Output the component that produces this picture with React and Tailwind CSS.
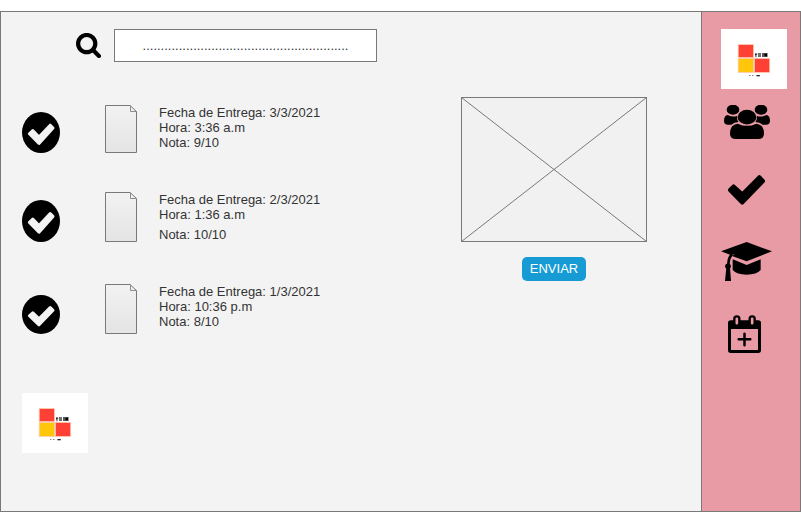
const TICK = "M7.4 21.8 L10.8 18.6 L17 25 L28.2 13.2 L31 16 L17 31.4 Z";

function CheckBadge({ className }) {
  return (
    <svg viewBox="0 0 38 41" preserveAspectRatio="none" className={`w-[38px] shrink-0 ${className}`}>
      <ellipse cx="19" cy="20.5" rx="19" ry="20.5" fill="#000" />
      <path d={TICK} fill="#f3f3f3" stroke="#f3f3f3" strokeWidth="3" strokeLinejoin="round" />
    </svg>
  );
}

function Doc({ className, h }) {
  return (
    <svg viewBox={`0 0 32 ${h}`} className={`w-8 shrink-0 ${className}`}>
      <defs>
        <linearGradient id={`paper${h}`} x1="0" y1="0" x2="0" y2="1">
          <stop offset="0" stopColor="#f2f2f2" />
          <stop offset="1" stopColor="#e4e4e4" />
        </linearGradient>
      </defs>
      <path d={`M.5 .5 H25 L31.5 6.5 V${h - 0.5} H.5 Z`} fill={`url(#paper${h})`} stroke="#797979" />
      <path d="M25.5 .5 V6.5 H31.5" fill="none" stroke="#8c8c8c" />
    </svg>
  );
}

function Logo() {
  return (
    <svg viewBox="0 0 66 60" className="h-[60px] w-[66px] shrink-0 bg-white">
      <g stroke="#ffc9ad" strokeWidth=".8">
        <rect x="17.2" y="15.6" width="15.3" height="13" fill="#ff4034" />
        <rect x="17.2" y="29.4" width="15.3" height="14" fill="#ffc60a" />
        <rect x="33.4" y="29.4" width="15.3" height="14" fill="#ff4034" />
      </g>
      <g fill="#222">
        <path d="M34 24.5h2.2v1.2h-.8v2.5h-.9v-2h-.5z" />
        <path d="M37 24h3v4h-3z" opacity=".65" />
        <path d="M41 24h5.6v4H41z" opacity=".75" />
        <path d="M43.5 24.7h2.5v2.6h-2.5z" fill="#000" />
        <path d="M28 46h1.5v1H28zM31 46h1.5v1H31z" opacity=".55" />
        <path d="M35.4 46h3.4v1.3h-3.4z" />
      </g>
    </svg>
  );
}

function SearchIcon() {
  return (
    <svg viewBox="0 0 25 25" className="mt-1 h-[25px] w-[25px] shrink-0" fill="none" stroke="#000">
      <circle cx="10.7" cy="10.6" r="8.6" strokeWidth="4.2" />
      <path d="M17.5 17.5 L22.9 22.9" strokeWidth="4.2" strokeLinecap="round" />
    </svg>
  );
}

function UsersIcon() {
  return (
    <svg viewBox="72 315 138 102" className="ml-[3px] mt-4 h-[34px] w-[46px]">
      <ellipse cx="99" cy="329" rx="19" ry="15" />
      <ellipse cx="183" cy="329" rx="19" ry="15" />
      <path d="M83 345 Q99 353 112 347 Q109 358 116 366 Q102 367 94 374 H84 Q72 374 72 363 Q72 347 83 345Z" />
      <path d="M199 345 Q183 353 170 347 Q173 358 166 366 Q180 367 188 374 H198 Q210 374 210 363 Q210 347 199 345Z" />
      <ellipse cx="141" cy="351.5" rx="28" ry="22" />
      <path d="M113 371 Q141 384 169 371 Q192 373 192 401 Q192 417 174 417 H108 Q90 417 90 401 Q90 373 113 371Z" />
    </svg>
  );
}

function CheckIcon() {
  return (
    <svg viewBox="84 75 112 90" className="ml-[7px] mt-9 h-[30px] w-[37px]">
      <path d="M90 120 L101 109 L127 133 L179 81 L190 93 L127 158 Z" stroke="#000" strokeWidth="12" strokeLinejoin="round" />
    </svg>
  );
}

function CapIcon() {
  return (
    <svg viewBox="63 276 153 117" className="mt-[37px] h-[39px] w-[51px]">
      <path d="M63 304 L140 276 L216 304 L140 334 L98 319 Q100 314 104 313 L92 315 Z" />
      <path d="M98 328 L140 345 L182 328 V360 Q170 374 140 374 Q110 374 98 360Z" />
      <path d="M97 313 Q85 320 85 348" fill="none" stroke="#000" strokeWidth="8" />
      <circle cx="84" cy="349" r="8.5" />
      <path d="M79 353 H90 L93 393 H75Z" />
    </svg>
  );
}

function CalendarIcon() {
  return (
    <svg viewBox="84 495 99 114" className="ml-[7px] mt-[34px] h-[38px] w-[33px]">
      <path fillRule="evenodd" d="M92 511 H175 Q183 511 183 519 V601 Q183 609 175 609 H92 Q84 609 84 601 V519 Q84 511 92 511Z M93 537 V600 H174 V537Z" />
      <rect x="103" y="499" width="15" height="28" rx="7" fill="#e99ba5" stroke="#000" strokeWidth="7" />
      <rect x="149" y="499" width="15" height="28" rx="7" fill="#e99ba5" stroke="#000" strokeWidth="7" />
      <path d="M133.5 551 V586 M116 568 H151" stroke="#000" strokeWidth="7.5" strokeLinecap="round" />
    </svg>
  );
}

const ENTRIES = [
  { date: "3/3/2021", time: "3:36 a.m", grade: "9/10", row: "h-[87px]", badge: "mt-[7px] h-[41px]", doc: "h-12", h: 48, gap: "" },
  { date: "2/3/2021", time: "1:36 a.m", grade: "10/10", row: "h-[92px]", badge: "mt-2 h-[42px]", doc: "h-[50px]", h: 50, gap: "mt-[5px]" },
  { date: "1/3/2021", time: "10:36 p.m", grade: "8/10", row: "h-[109px]", badge: "mt-[11px] h-[39px]", doc: "h-[50px]", h: 50, gap: "" },
];

export default function App() {
  return (
    <div className="h-[512px] w-[801px] overflow-hidden bg-white pt-[11px] font-['Liberation_Sans',Arial,sans-serif] text-[13px] leading-[15px] text-[#333]">
      <div className="flex h-[501px] border border-[#797979] bg-[#f3f3f3]">
        <main className="w-[700px] shrink-0">
          <div className="flex pl-[75px] pt-[17px]">
            <SearchIcon />
            <div className="ml-[13px] flex h-[33px] w-[263px] items-center justify-center border border-[#797979] bg-white">
              .........................................................
            </div>
          </div>
          <div className="flex pl-[21px]">
            <div className="w-[439px] shrink-0 pt-[43px]">
              {ENTRIES.map((e) => (
                <div key={e.date} className={`flex items-start ${e.row}`}>
                  <CheckBadge className={e.badge} />
                  <Doc className={`ml-[45px] ${e.doc}`} h={e.h} />
                  <div className="ml-[22px]">
                    <p>Fecha de Entrega: {e.date}</p>
                    <p>Hora: {e.time}</p>
                    <p className={e.gap}>Nota: {e.grade}</p>
                  </div>
                </div>
              ))}
              <Logo />
            </div>
            <div className="flex w-[186px] flex-col items-center pt-[35px]">
              <svg viewBox="0 0 186 145" className="h-[145px] w-[186px]" fill="none" stroke="#797979">
                <rect x=".5" y=".5" width="185" height="144" fill="#f1f1f1" />
                <path d="M.5 .5 L185.5 144.5 M185.5 .5 L.5 144.5" />
              </svg>
              <button className="mt-[15px] h-6 w-16 rounded-[5px] bg-[#169bd5] pb-px text-white">ENVIAR</button>
            </div>
          </div>
        </main>
        <aside className="flex flex-1 flex-col border-l border-[#797979] bg-[#e99ba5] pl-[19px] pt-[17px]">
          <Logo />
          <UsersIcon />
          <CheckIcon />
          <CapIcon />
          <CalendarIcon />
        </aside>
      </div>
    </div>
  );
}
